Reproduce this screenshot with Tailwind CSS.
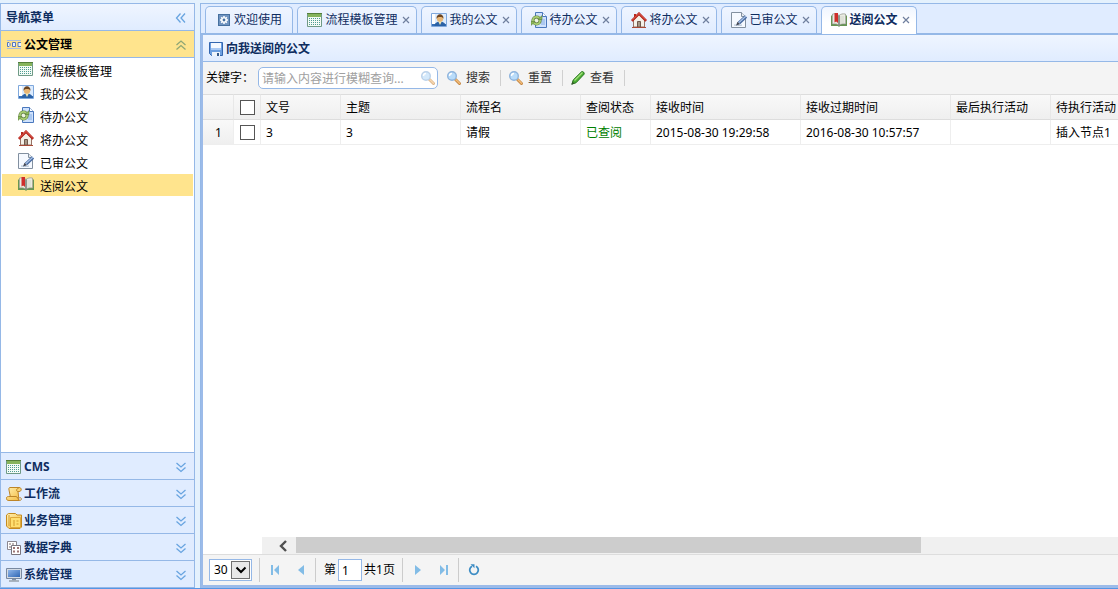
<!DOCTYPE html>
<html lang="zh-CN">
<head>
<meta charset="utf-8">
<title>公文管理</title>
<script src="https://cdn.jsdelivr.net/npm/@tailwindcss/browser@4"></script>
</head>
<body class="flex h-screen flex-col overflow-hidden bg-[#e4f1fd] font-['Noto_Sans','Noto_Sans_CJK_SC',sans-serif] text-xs leading-4 text-black">

<svg class="absolute size-0" aria-hidden="true">
  <defs>
    <linearGradient id="gold" x1="0" y1="0" x2="1" y2="1"><stop offset="0" stop-color="#fff0b0"/><stop offset="1" stop-color="#f3b93c"/></linearGradient>
    <linearGradient id="screen" x1="0" y1="0" x2="1" y2="1"><stop offset="0" stop-color="#8fb6ea"/><stop offset="1" stop-color="#2f66b4"/></linearGradient>
  </defs>
  <symbol id="calendar" viewBox="0 0 16 16">
    <path d="M.5 1.500h14v13H.5z" fill="#f4fbf6" stroke="#6f9a86"/>
    <path d="M1 2h13v3H1z" fill="#86b45c"/><path d="M0 1h15v1H0z" fill="#557f3a"/>
    <path d="M2 6.500h11M2 8.500h11M2 10.500h11M2 12.500h11" stroke="#4f9c92" stroke-dasharray="1 1"/>
  </symbol>
  <symbol id="person" viewBox="0 0 16 16">
    <path d="M.5 1.500h15v13H.5z" fill="#dcecff" stroke="#7fa8dc"/>
    <path d="M1 2h3v10H1z" fill="#fff"/><path d="M1 12h14v2H1z" fill="#356fb8"/>
    <path d="M3.500 14c0-3 2.500-4.500 5.500-4.500s5.500 1.500 5.500 4.500z" fill="#2b62a6"/><path d="M7 9h4l-2 4z" fill="#f0e9b8"/>
    <circle cx="9" cy="6.500" r="3.200" fill="#e8b675"/><path d="M5.500 7C5 .8 13 .8 12.500 7 12 5 10 4.700 8 5 6.500 5.200 6 6 5.500 7z" fill="#6b4420"/>
  </symbol>
  <symbol id="doc-refresh" viewBox="0 0 16 16">
    <path d="M4.500.5h7l4 4v11h-11z" fill="#cfe2fd" stroke="#4a78bd"/><path d="M11.500.5v4h4" fill="#fff" stroke="#4a78bd"/>
    <path d="M10 8h4M10 10h4M10 12h4" stroke="#86aee4"/>
    <circle cx="5.500" cy="8.500" r="3.600" fill="#edf5e2" stroke="#59783a" stroke-width="3"/>
    <circle cx="5.500" cy="8.500" r="3.600" fill="none" stroke="#a9cf73" stroke-width="1.800"/>
    <path d="M7 7.500h4v-4zM4 9.500H0v4z" fill="#8fbd58" stroke="#59783a" stroke-width=".6"/>
  </symbol>
  <symbol id="house" viewBox="0 0 16 16">
    <path d="M3 2h2v4H3z" fill="#b52b20"/><path d="M2.500 8L8 2.500 13.500 8v7h-11z" fill="#f4f1e8" stroke="#987366"/>
    <path d="M.8 8.800L8 1.600l7.200 7.200" fill="none" stroke="#b52018" stroke-width="2.400"/>
    <path d="M1.300 8L8 1.400 14.700 8" fill="none" stroke="#ef7a68" stroke-width=".8"/>
    <path d="M6.500 9.500h3V15h-3z" fill="#a69787" stroke="#71594c"/><path d="M1 15.500h14" stroke="#aa4a37"/>
  </symbol>
  <symbol id="doc-edit" viewBox="0 0 16 16">
    <path d="M.5.5h10l4 4v11H.5z" fill="#f5f9ff" stroke="#8290a0"/><path d="M10.500.5v4h4" fill="#e5eaf0" stroke="#8290a0"/>
    <path d="M3 13c3 0 4 1 8 0" fill="none" stroke="#a9bbd0"/>
    <path d="M15 4.500L8 11" stroke="#46699f" stroke-width="3.200"/><path d="M14.800 4.300L8 10.500" stroke="#a9c3e8" stroke-width="1.200"/><path d="M5 13.500l1.500-3.700 2.500 2.500z" fill="#454a58"/>
  </symbol>
  <symbol id="book" viewBox="0 0 16 16">
    <path d="M0 4l1-1v9h14V3l1 1v10H9l-1 1-1-1H0z" fill="#679554"/>
    <path d="M1.500 2C4 1.500 6.500 2 8 3.500v10C6.500 12 4 11.500 1.500 12zM14.500 2C12 1.500 9.500 2 8 3.500v10c1.500-1.500 4-2 6.500-1.500z" fill="#e9ebe2" stroke="#8e9489" stroke-width=".7"/>
    <path d="M8 3.500v10" stroke="#6f766f"/><path d="M3.500 1h3.500v10L5.200 9.500 3.500 10.500z" fill="#cf2d2b"/>
    <path d="M10 4v8M12 4v7" stroke="#d3d7cd"/>
  </symbol>
  <symbol id="gear" viewBox="0 0 16 16">
    <path d="M2 2h12v12H2z" fill="#46709f"/><path d="M3 3h10v10H3z" fill="#7094c0"/>
    <path d="M8 4v8M4 8h8M5.200 5.200l5.600 5.600M10.800 5.200l-5.600 5.600" stroke="#fff" stroke-width="1.500"/><circle cx="8" cy="8" r="2.800" fill="#fff"/><circle cx="8" cy="8" r="1.400" fill="#46709f"/>
  </symbol>
  <symbol id="floppy" viewBox="0 0 16 16">
    <path d="M1.500 1.500h13v13h-11l-2-2z" fill="#6d9fe0" stroke="#3467b0"/><path d="M3 2h10v6H3z" fill="#f5f9ff"/>
    <path d="M3 7h10v2H3z" fill="#a9c9f3"/><path d="M4 11h8v4H4z" fill="#eef3fa"/><path d="M9 12h2v3H9z" fill="#345989"/>
  </symbol>
  <symbol id="lens" viewBox="0 0 16 16">
    <path d="M9.500 9.500L13.500 13.500" stroke="#c58642" stroke-width="3" stroke-linecap="round"/><path d="M10 9.700L13.500 13.200" stroke="#f3bd79" stroke-width="1.400" stroke-linecap="round"/>
    <circle cx="6" cy="6" r="4.300" fill="#b9dcfa" stroke="#8fb4dc" stroke-width="1.400"/><path d="M3.500 6A2.500 2.500 0 0 1 6 3.500" fill="none" stroke="#fff" stroke-width="1.400"/>
  </symbol>
  <symbol id="pencil" viewBox="0 0 16 16">
    <path d="M2 14l1.200-4L11.500 1.800c1.200-1 3.500 1 2.500 2.500L6 12.800z" fill="#4cae34" stroke="#27751e"/>
    <path d="M4.500 10.500l8-8" stroke="#a4e07c" stroke-width="1.200"/><path d="M1.200 15l1.300-3.500 2 2z" fill="#335c2a"/>
  </symbol>
  <symbol id="doc-label" viewBox="0 0 16 16">
    <path d="M1 3.500h14M1 11.500h14" stroke="#a9bddf"/>
    <path d="M1.500 5.500h1.500l1 1v2l-1 1H1.500zM6.500 5.500h3v4h-3zM15 5.500h-3v4h3" fill="#eaf2ff" stroke="#5578bd"/>
  </symbol>
  <symbol id="scroll" viewBox="0 0 16 16">
    <path d="M4 1.500h9c3 0 3 4 0 4h-1l1 9H3c-3.500 0-3.500-4-.5-4h1.800L3 4c-.3-1.500 0-2.500 1-2.500z" fill="url(#gold)" stroke="#bd8528"/>
    <path d="M12 5.500c-2 0-2-3 .5-3M4 10.500h6c2 0 2 4 3.500 4 2.500 0 2.500-3 0-3" fill="none" stroke="#bd8528"/>
  </symbol>
  <symbol id="folder" viewBox="0 0 16 16">
    <path d="M.5 2l2-1.500h7L11 2h4.500v12l-1.500 1.500H3L.5 13z" fill="url(#gold)" stroke="#c58b20"/>
    <path d="M4.500 4.500h10v10h-10z" fill="#ffdf70" stroke="#dfa93c"/><path d="M3 2v11M8 7v6M10.500 8h2M10.500 11h2" stroke="#d39b2d"/>
  </symbol>
  <symbol id="grids" viewBox="0 0 16 16">
    <path d="M1.500 1.500h9v8h-9z" fill="#fff" stroke="#8b8790"/><path d="M3 4h6M3 7h3" stroke="#a79b9b" stroke-width="1.500" stroke-dasharray="2 1"/>
    <path d="M5.500 5.500h9v9h-9z" fill="#fff" stroke="#78757e"/><path d="M7 8h6M7 11.500h6" stroke="#9d7676" stroke-width="2" stroke-dasharray="2 2"/>
  </symbol>
  <symbol id="monitor" viewBox="0 0 16 16">
    <path d="M.5 1.500h15v10H.5z" fill="#d5dce5" stroke="#7989a0"/><path d="M2 3h12v7H2z" fill="url(#screen)"/>
    <path d="M6 12h4v1.500H6z" fill="#8090a4"/><path d="M3 14h10" stroke="#9ba5b1" stroke-width="1.600"/>
  </symbol>
  <symbol id="chev-down" viewBox="0 0 16 16"><path d="M3.500 4L8 8l4.500-4M3.500 8.500L8 12.500l4.500-4" fill="none" stroke="currentColor" stroke-width="1.300"/></symbol>
  <symbol id="chev-up" viewBox="0 0 16 16"><path d="M3.500 8L8 4l4.500 4M3.500 12.500L8 8.500l4.500 4" fill="none" stroke="currentColor" stroke-width="1.300"/></symbol>
  <symbol id="chev-left" viewBox="0 0 16 16"><path d="M7.500 3.500L3.500 8l4 4.500M12 3.500L8 8l4 4.500" fill="none" stroke="currentColor" stroke-width="1.300"/></symbol>
  <symbol id="close" viewBox="0 0 8 8"><path d="M1 1l6 6M7 1L1 7" stroke="#6f7f9e" stroke-width="1.200"/></symbol>
</svg>

<div class="flex min-h-0 flex-1 gap-[5px] pt-[3px]">
  <aside class="flex w-[195px] shrink-0 flex-col border border-[#95b8e7] bg-white font-bold text-[#0e2d5f]">
    <div class="flex h-[26px] shrink-0 items-center justify-between bg-linear-to-b from-[#eff5ff] to-[#e0ecff] px-[5px] pt-0.5">
      <h2>导航菜单</h2>
      <button class="text-[#68a4e0]" aria-label="折叠菜单"><svg class="size-4"><use href="#chev-left"/></svg></button>
    </div>
    <button class="flex h-7 shrink-0 items-center border-y border-[#95b8e7] bg-[#ffe48d] px-[5px] pt-0.5 text-black">
      <svg class="mr-0.5 size-4"><use href="#doc-label"/></svg>公文管理<svg class="ml-auto size-4 text-[#8fa675]"><use href="#chev-up"/></svg>
    </button>
    <nav class="flex flex-1 flex-col gap-px p-px font-normal text-black">
      <a href="#" class="flex h-[22px] items-center gap-1.5 pt-[3px] pl-4"><svg class="mb-1.5 size-4"><use href="#calendar"/></svg>流程模板管理</a>
      <a href="#" class="flex h-[22px] items-center gap-1.5 pt-[3px] pl-4"><svg class="mb-1.5 size-4"><use href="#person"/></svg>我的公文</a>
      <a href="#" class="flex h-[22px] items-center gap-1.5 pt-[3px] pl-4"><svg class="mb-1.5 size-4"><use href="#doc-refresh"/></svg>待办公文</a>
      <a href="#" class="flex h-[22px] items-center gap-1.5 pt-[3px] pl-4"><svg class="mb-1.5 size-4"><use href="#house"/></svg>将办公文</a>
      <a href="#" class="flex h-[22px] items-center gap-1.5 pt-[3px] pl-4"><svg class="mb-1.5 size-4"><use href="#doc-edit"/></svg>已审公文</a>
      <a href="#" class="flex h-[22px] items-center gap-1.5 bg-[#ffe48d] pt-[3px] pl-4"><svg class="mb-1.5 size-4"><use href="#book"/></svg>送阅公文</a>
    </nav>
    <button class="flex h-[27px] shrink-0 items-center border-t border-[#95b8e7] bg-[#e0ecff] px-[5px] pt-0.5"><svg class="mr-0.5 size-4"><use href="#calendar"/></svg>CMS<svg class="ml-auto size-4 text-[#68a4e0]"><use href="#chev-down"/></svg></button>
    <button class="flex h-[27px] shrink-0 items-center border-t border-[#95b8e7] bg-[#e0ecff] px-[5px] pt-0.5"><svg class="mr-0.5 size-4"><use href="#scroll"/></svg>工作流<svg class="ml-auto size-4 text-[#68a4e0]"><use href="#chev-down"/></svg></button>
    <button class="flex h-[27px] shrink-0 items-center border-t border-[#95b8e7] bg-[#e0ecff] px-[5px] pt-0.5"><svg class="mr-0.5 size-4"><use href="#folder"/></svg>业务管理<svg class="ml-auto size-4 text-[#68a4e0]"><use href="#chev-down"/></svg></button>
    <button class="flex h-[27px] shrink-0 items-center border-t border-[#95b8e7] bg-[#e0ecff] px-[5px] pt-0.5"><svg class="mr-0.5 size-4"><use href="#grids"/></svg>数据字典<svg class="ml-auto size-4 text-[#68a4e0]"><use href="#chev-down"/></svg></button>
    <button class="flex h-[27px] shrink-0 items-center border-t border-[#95b8e7] bg-[#e0ecff] px-[5px] pt-0.5"><svg class="mr-0.5 size-4"><use href="#monitor"/></svg>系统管理<svg class="ml-auto size-4 text-[#68a4e0]"><use href="#chev-down"/></svg></button>
  </aside>

  <main class="flex min-w-0 flex-1 flex-col border-t border-l border-[#95b8e7] bg-[#e0ecff]">
    <div class="flex h-[31px] shrink-0 gap-1 border-b-2 border-[#95b8e7] pt-0.5 pl-1 text-[#0e2d5f]">
      <button class="flex h-[27px] w-[88px] items-center justify-center rounded-t-[5px] border border-b-0 border-[#95b8e7] bg-linear-to-b from-[#eff5ff] to-[#e0ecff]"><svg class="mr-0.5 size-4"><use href="#gear"/></svg>欢迎使用</button>
      <button class="flex h-[27px] w-[120px] items-center justify-center rounded-t-[5px] border border-b-0 border-[#95b8e7] bg-linear-to-b from-[#eff5ff] to-[#e0ecff] pl-[3px]"><svg class="mr-0.5 size-4"><use href="#calendar"/></svg>流程模板管理<svg class="ml-1 size-2"><use href="#close"/></svg></button>
      <button class="flex h-[27px] w-24 items-center justify-center rounded-t-[5px] border border-b-0 border-[#95b8e7] bg-linear-to-b from-[#eff5ff] to-[#e0ecff] pl-[3px]"><svg class="mr-0.5 size-4"><use href="#person"/></svg>我的公文<svg class="ml-1 size-2"><use href="#close"/></svg></button>
      <button class="flex h-[27px] w-24 items-center justify-center rounded-t-[5px] border border-b-0 border-[#95b8e7] bg-linear-to-b from-[#eff5ff] to-[#e0ecff] pl-[3px]"><svg class="mr-0.5 size-4"><use href="#doc-refresh"/></svg>待办公文<svg class="ml-1 size-2"><use href="#close"/></svg></button>
      <button class="flex h-[27px] w-24 items-center justify-center rounded-t-[5px] border border-b-0 border-[#95b8e7] bg-linear-to-b from-[#eff5ff] to-[#e0ecff] pl-[3px]"><svg class="mr-0.5 size-4"><use href="#house"/></svg>将办公文<svg class="ml-1 size-2"><use href="#close"/></svg></button>
      <button class="flex h-[27px] w-24 items-center justify-center rounded-t-[5px] border border-b-0 border-[#95b8e7] bg-linear-to-b from-[#eff5ff] to-[#e0ecff] pl-[3px]"><svg class="mr-0.5 size-4"><use href="#doc-edit"/></svg>已审公文<svg class="ml-1 size-2"><use href="#close"/></svg></button>
      <button class="flex h-7 w-24 items-center justify-center rounded-t-[5px] border border-b-0 border-[#95b8e7] bg-linear-to-b from-[#eff5ff] to-white to-60% pb-px pl-[3px] font-bold"><svg class="mr-0.5 size-4"><use href="#book"/></svg>送阅公文<svg class="ml-1 size-2"><use href="#close"/></svg></button>
    </div>

    <section class="flex min-h-0 flex-1 flex-col border-b-3 border-l-2 border-[#9cbbe9] bg-white">
      <h1 class="flex h-[27px] shrink-0 items-center gap-0.5 border-b border-[#95b8e7] bg-linear-to-b from-[#eff5ff] to-[#e0ecff] pt-px pl-[5px] font-bold text-[#0e2d5f]"><svg class="size-4"><use href="#floppy"/></svg>向我送阅的公文</h1>
      <div class="flex h-8 shrink-0 items-center bg-[#f4f4f4] pl-[3px] text-[#333]">
        <label for="kw" class="w-[52px] whitespace-nowrap text-black">关键字：</label>
        <div class="relative w-[180px]">
          <input id="kw" type="text" placeholder="请输入内容进行模糊查询..." class="block h-[22px] w-full rounded-[5px] border border-[#95b8e7] bg-white pr-6 pl-[3px] outline-none placeholder:text-[#a0a0a0]">
          <svg class="absolute top-[3px] right-0.5 size-4 opacity-60"><use href="#lens"/></svg>
        </div>
        <button class="ml-2 flex h-6 items-center gap-1"><svg class="size-4"><use href="#lens"/></svg>搜索</button>
        <span class="ml-2.5 h-4 border-l border-[#d0d0d0]"></span>
        <button class="ml-[7px] flex h-6 items-center gap-1"><svg class="size-4"><use href="#lens"/></svg>重置</button>
        <span class="ml-2.5 h-4 border-l border-[#d0d0d0]"></span>
        <button class="ml-[7px] flex h-6 items-center gap-1"><svg class="size-4"><use href="#pencil"/></svg>查看</button>
        <span class="ml-2.5 h-4 border-l border-[#d0d0d0]"></span>
      </div>

      <div class="min-h-0 flex-1 overflow-hidden">
        <table class="w-[978px] table-fixed border-separate border-spacing-0 text-left whitespace-nowrap">
          <colgroup><col class="w-[31px]"><col class="w-[27px]"><col class="w-20"><col class="w-[120px]"><col class="w-[120px]"><col class="w-[70px]"><col class="w-[150px]"><col class="w-[150px]"><col class="w-[100px]"><col class="w-[130px]"></colgroup>
          <thead class="[&_th]:h-[26px] [&_th]:border-t [&_th]:border-r [&_th]:border-b [&_th]:border-t-[#ddd] [&_th]:border-r-[#e8e8e8] [&_th]:border-b-[#ddd] [&_th]:bg-linear-to-b [&_th]:from-[#f9f9f9] [&_th]:to-[#efefef] [&_th]:pt-px [&_th]:pr-1 [&_th]:pb-0 [&_th]:pl-[5px] [&_th]:font-normal">
            <tr><th></th><th><input type="checkbox" aria-label="全选" class="ml-px block size-[15px] appearance-none border border-[#555] bg-white"></th><th>文号</th><th>主题</th><th>流程名</th><th>查阅状态</th><th>接收时间</th><th>接收过期时间</th><th>最后执行活动</th><th>待执行活动</th></tr>
          </thead>
          <tbody class="[&_td]:h-[25px] [&_td]:border-r [&_td]:border-b [&_td]:border-[#eee] [&_td]:pt-px [&_td]:pr-1 [&_td]:pb-0 [&_td]:pl-[5px]">
            <tr><td class="bg-linear-to-b from-[#f9f9f9] to-[#efefef] text-center">1</td><td><input type="checkbox" aria-label="选择第1行" class="ml-px block size-[15px] appearance-none border border-[#555] bg-white"></td><td>3</td><td>3</td><td>请假</td><td class="text-[#008000]">已查阅</td><td>2015-08-30 19:29:58</td><td>2016-08-30 10:57:57</td><td></td><td>插入节点1</td></tr>
          </tbody>
        </table>
      </div>

      <div class="ml-[59px] flex h-[17px] shrink-0 bg-[#f0f0f0]">
        <button class="flex w-[34px] items-center justify-center pl-2" aria-label="向左滚动"><svg class="size-3" viewBox="0 0 12 12"><path d="M9 1L4 6l5 5" fill="none" stroke="#505050" stroke-width="2.400"/></svg></button>
        <div class="mb-px w-[73%] bg-[#cdcdcd]"></div>
      </div>

      <div class="flex h-[31px] shrink-0 items-center border-t border-[#ddd] bg-[#f4f4f4] pl-1.5">
        <div class="relative">
          <select aria-label="每页条数" class="block h-[22px] w-[43px] appearance-none border border-[#95b8e7] bg-white pl-1"><option>30</option></select>
          <span class="pointer-events-none absolute top-0.5 right-0.5 flex h-[18px] w-[19px] items-center justify-center border border-[#707070] bg-[#e8e8e8]"><svg class="size-3" viewBox="0 0 12 12"><path d="M1.500 3.500L6 8l4.500-4.500" fill="none" stroke="#000" stroke-width="2"/></svg></span>
        </div>
        <span class="ml-[7px] h-6 border-l border-[#ccc]"></span>
        <button class="ml-[7px] size-4 text-[#82bce6]" aria-label="首页"><svg class="size-4" viewBox="0 0 16 16"><path d="M4 3h2v10H4zM12 3v10L7 8z" fill="currentColor"/></svg></button>
        <button class="ml-2.5 size-4 text-[#82bce6]" aria-label="上一页"><svg class="size-4" viewBox="0 0 16 16"><path d="M11 3v10L5 8z" fill="currentColor"/></svg></button>
        <span class="mr-2 ml-1.5 h-6 border-l border-[#ccc]"></span>
        <label for="pg">第</label>
        <input id="pg" type="text" value="1" class="mx-0.5 h-[22px] w-6 border border-[#95b8e7] bg-white pl-[3px]">
        <span>共1页</span>
        <span class="ml-[7px] h-6 border-l border-[#ccc]"></span>
        <button class="ml-[7px] size-4 text-[#82bce6]" aria-label="下一页"><svg class="size-4" viewBox="0 0 16 16"><path d="M5 3v10l6-5z" fill="currentColor"/></svg></button>
        <button class="ml-2.5 size-4 text-[#82bce6]" aria-label="末页"><svg class="size-4" viewBox="0 0 16 16"><path d="M10 3h2v10h-2zM4 3v10l5-5z" fill="currentColor"/></svg></button>
        <span class="ml-1.5 h-6 border-l border-[#ccc]"></span>
        <button class="ml-[7px] size-4" aria-label="刷新"><svg class="size-4" viewBox="0 0 16 16"><path d="M10 4.200A4.300 4.300 0 1 1 6 4.200" fill="none" stroke="#3c8cc4" stroke-width="1.800"/><path d="M4.500 2.200h4v4z" fill="#3c8cc4"/></svg></button>
      </div>
    </section>
  </main>
</div>
<footer class="h-px shrink-0 bg-[#5596e6]"></footer>
</body>
</html>
